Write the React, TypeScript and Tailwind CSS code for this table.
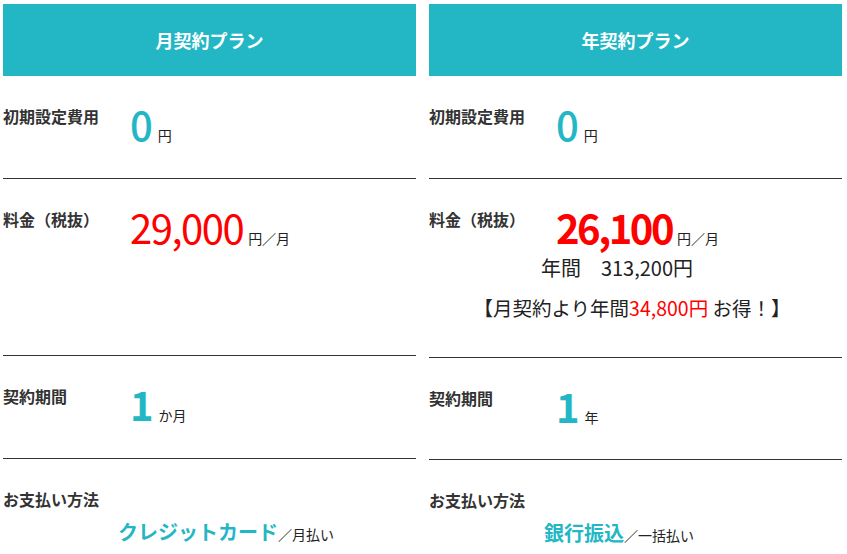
const font = { fontFamily: '"Noto Sans CJK JP", "Noto Sans", sans-serif' };

function Row({ label, children, className = "" }: { label: string; children: React.ReactNode; className?: string }) {
  return (
    <div className={`flex border-b border-[#333] ${className}`}>
      <div className="w-[127px] shrink-0 pt-[28px] text-[16px] leading-[24px] font-bold text-[#333]">{label}</div>
      <div className="flex-1 pt-[24px]">{children}</div>
    </div>
  );
}

function Big({ value, unit, weight = "font-medium", color = "text-[#23b7c6]", track = "" }: { value: string; unit: string; weight?: string; color?: string; track?: string }) {
  return (
    <div className="flex items-baseline">
      <span className={`text-[40px] leading-[48px] ${weight} ${color} ${track}`}>{value}</span>
      <span className="ml-[5px] text-[14px] text-[#222]">{unit}</span>
    </div>
  );
}

export default function App() {
  return (
    <div className="w-[847px] h-[554px] overflow-hidden bg-white pl-[3px] pr-[5px] pt-[4px]" style={font}>
      <div className="grid grid-cols-2 gap-x-[13px]">
        {/* 月契約 */}
        <div className="flex flex-col">
          <div className="h-[72px] bg-[#23b7c6] flex items-center justify-center text-white font-bold text-[18px]">月契約プラン</div>
          <Row label="初期設定費用" className="h-[103px]">
            <Big value="0" unit="円" />
          </Row>
          <Row label="料金（税抜）" className="h-[177px]">
            <Big value="29,000" unit="円／月" weight="font-normal" color="text-[#ff0000]" track="tracking-[-1.5px]" />
          </Row>
          <Row label="契約期間" className="h-[103px]">
            <Big value="1" unit="か月" weight="font-bold" />
          </Row>
          <div className="pt-[28px]">
            <div className="text-[16px] leading-[24px] font-bold text-[#333]">お支払い方法</div>
            <div className="mt-[6px] pl-[115px] flex items-baseline">
              <span className="text-[20px] font-bold text-[#23b7c6]">クレジットカード</span>
              <span className="text-[14px] text-[#222]">／月払い</span>
            </div>
          </div>
        </div>

        {/* 年契約 */}
        <div className="flex flex-col">
          <div className="h-[72px] bg-[#23b7c6] flex items-center justify-center text-white font-bold text-[18px]">年契約プラン</div>
          <Row label="初期設定費用" className="h-[103px]">
            <Big value="0" unit="円" />
          </Row>
          <div className="flex border-b border-[#333] h-[179px]">
            <div className="w-[127px] shrink-0 pt-[28px] text-[16px] leading-[24px] font-bold text-[#333]">料金（税抜）</div>
            <div className="pt-[24px] flex-1">
              <Big value="26,100" unit="円／月" weight="font-bold" color="text-[#ff0000]" track="tracking-[-2.5px]" />
              <div className="w-[340px] -ml-[94px] flex flex-col items-center text-[#222] whitespace-nowrap">
                <div className="mt-[3px] text-[20px] leading-[28px] -ml-[30px]">年間　313,200円</div>
                <div className="mt-[12px] text-[19.5px] leading-[28px]">
                  【月契約より年間<span className="text-[#ff0000]">34,800円</span> お得！】
                </div>
              </div>
            </div>
          </div>
          <Row label="契約期間" className="h-[102px]">
            <Big value="1" unit="年" weight="font-bold" />
          </Row>
          <div className="pt-[28px]">
            <div className="text-[16px] leading-[24px] font-bold text-[#333]">お支払い方法</div>
            <div className="mt-[6px] pl-[115px] flex items-baseline">
              <span className="text-[20px] font-bold text-[#23b7c6]">銀行振込</span>
              <span className="text-[14px] text-[#222]">／一括払い</span>
            </div>
          </div>
        </div>
      </div>
    </div>
  );
}
